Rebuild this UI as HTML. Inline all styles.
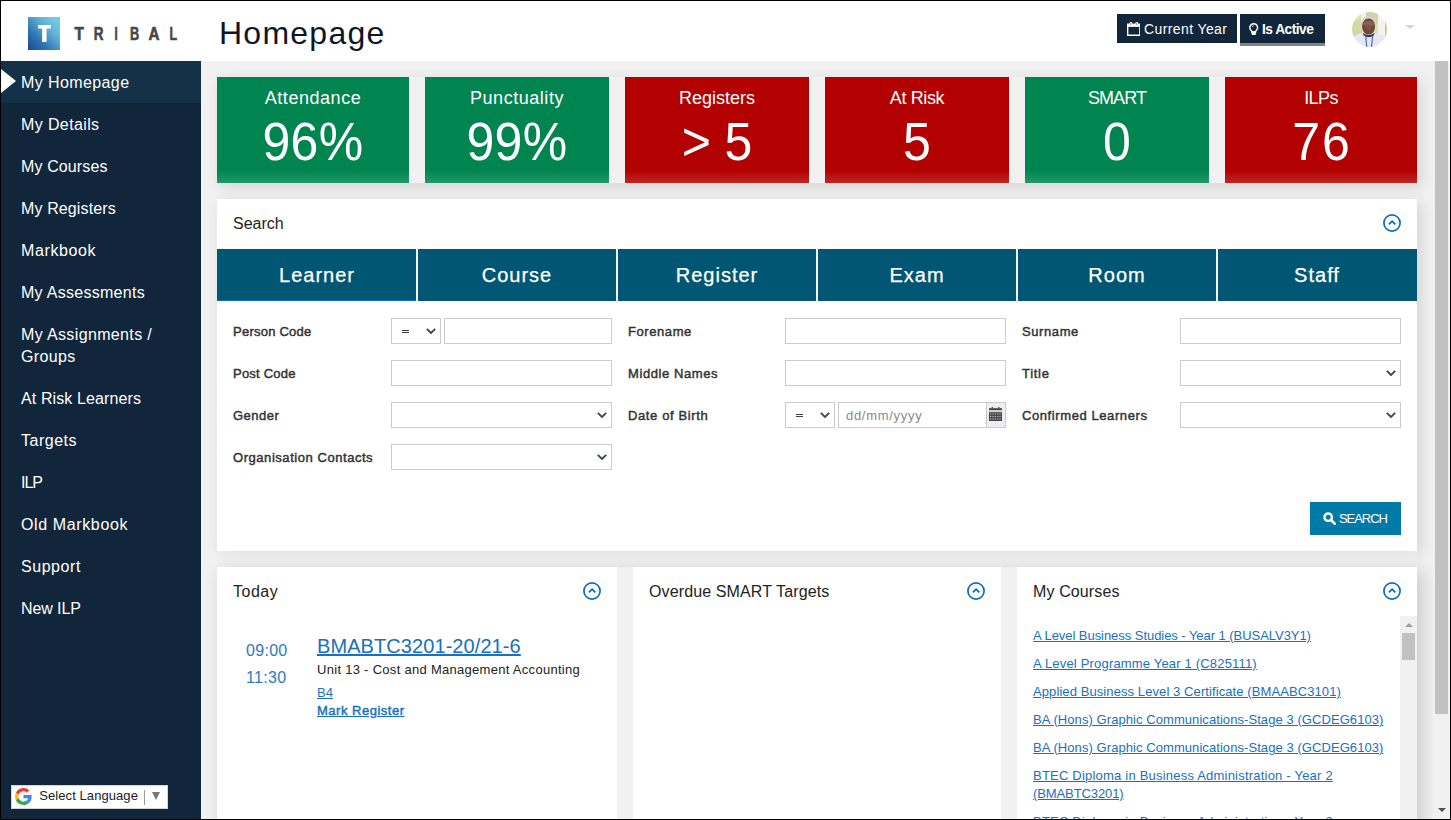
<!DOCTYPE html>
<html lang="en">
<head>
<meta charset="utf-8">
<title>Homepage</title>
<style>
*{box-sizing:border-box;}
html,body{margin:0;padding:0;font-family:"Liberation Sans",sans-serif;}
body{width:1451px;height:820px;overflow:hidden;position:relative;background:#f1f1f1;
  font-family:"Liberation Sans",sans-serif;font-size:13px;color:#222;}
a{color:#1770c4;text-decoration:underline;}
.abs{position:absolute;}
.nw{white-space:nowrap;}

/* ---------- frame ---------- */
#frame{position:absolute;left:0;top:0;width:1451px;height:820px;border:1px solid #000;z-index:100;pointer-events:none;}

/* ---------- header ---------- */
#header{position:absolute;left:1px;top:1px;width:1449px;height:60px;background:#fff;z-index:20;}
#logo{position:absolute;left:27px;top:16px;width:32px;height:33px;
  background:linear-gradient(45deg,#1b4793 0%,#2f74b0 32%,#5fb0d6 64%,#74cbe6 88%);}
#logo svg{position:absolute;left:0;top:0;}
#brand{position:absolute;left:70px;top:22px;}
#title{position:absolute;left:218px;top:12.500px;font-size:32px;line-height:38px;letter-spacing:1.25px;color:#0e1626;}
.hbtn{position:absolute;top:13px;height:29px;background:#11263b;color:#fff;}
#btn-year{left:1116px;width:120px;}
#btn-active{left:1239px;width:85px;height:32px;border-bottom:3px solid #848484;}
.hbtn span{position:absolute;white-space:nowrap;line-height:18px;}
.hbtn svg{position:absolute;}
#avatar{position:absolute;left:1351px;top:11px;width:35px;height:35px;}
#caret{position:absolute;left:1404px;top:24px;width:0;height:0;border-left:5px solid transparent;border-right:5px solid transparent;border-top:4.5px solid #d5d5d5;}

/* ---------- sidebar ---------- */
#sidebar{position:absolute;left:1px;top:61px;width:200px;height:758px;background:#11263b;z-index:15;color:#fff;font-size:16px;}
#sidebar ul{list-style:none;margin:0;padding:0;}
#sidebar li{padding:11px 20px 9px;line-height:22px;position:relative;white-space:nowrap;}
#sidebar li.active{background:#133247;}
#sidebar li.active:before{content:"";position:absolute;left:0;top:8px;width:0;height:0;border-top:12px solid transparent;border-bottom:12px solid transparent;border-left:15px solid #fff;}
#gt{position:absolute;left:10px;top:724px;width:157px;height:24px;background:#fff;border:1px solid #d5d5d5;color:#222;font-size:13px;}
#gt svg{position:absolute;left:3px;top:2px;}
#gt .t{position:absolute;left:27.3px;top:2px;line-height:16px;letter-spacing:0.07px;white-space:nowrap;}
#gt .sep{position:absolute;left:132px;top:4px;width:1px;height:15px;background:#9a9a9a;}
#gt .arr{position:absolute;left:139.700px;top:6px;width:0;height:0;border-left:4.600px solid transparent;border-right:4.600px solid transparent;border-top:8.700px solid #767676;}

/* ---------- page scrollbar ---------- */
#vscroll{position:absolute;left:1433px;top:61px;width:17px;height:758px;background:#f1f1f1;z-index:10;}
#vscroll .thumb{position:absolute;left:2px;top:0;width:13px;height:653px;background:#c1c1c1;}
#vscroll .down{position:absolute;left:5px;top:747px;width:0;height:0;border-left:4px solid transparent;border-right:4px solid transparent;border-top:4px solid #505050;}

/* ---------- main ---------- */
#main{position:absolute;left:201px;top:61px;width:1232px;height:758px;overflow:hidden;}

/* ---------- cards ---------- */
#cards{position:absolute;left:16px;top:16px;width:1200px;height:106px;box-shadow:4px 4px 14px rgba(0,0,0,.12);}
.card{position:absolute;top:0;height:106px;color:#fff;text-align:center;}
.card.g{background:linear-gradient(to bottom,#008450 0,#008450 88%,#239769 100%);}
.card.r{background:linear-gradient(to bottom,#b30000 0,#b30000 88%,#bf2626 100%);}
.card .l{position:absolute;left:0;right:0;top:9px;font-size:18px;line-height:24px;white-space:nowrap;}
.card .v{position:absolute;left:0;right:0;top:34px;font-size:50px;line-height:58px;white-space:nowrap;letter-spacing:.3px;transform:scaleY(1.07);transform-origin:50% 0;}

/* ---------- panels ---------- */
.panel{position:absolute;background:#fff;}
#search{box-shadow:4px 4px 14px rgba(0,0,0,.12);}
#brow{position:absolute;left:16px;top:506px;width:1200px;height:270px;box-shadow:5px 4px 16px rgba(0,0,0,.17);}
#sfade{position:absolute;left:0;top:490px;width:1216px;height:16px;background:rgba(241,241,241,.5);}
.panel h3{position:absolute;left:16px;top:14px;margin:0;font-size:16px;line-height:22px;font-weight:400;color:#222;white-space:nowrap;}
.panel .col{position:absolute;top:15px;width:18px;height:18px;}

/* tabs */
#tabs{position:absolute;left:0;top:50px;width:1200px;height:52px;background:#005673;color:#fff;font-size:20px;}
#tabs .tab{position:absolute;top:0;width:200px;height:52px;line-height:52px;text-align:center;white-space:nowrap;letter-spacing:1px;-webkit-text-stroke:.25px #fff;}
#tabs .sepv{position:absolute;top:0;width:2px;height:52px;background:#fbf6f3;}
#tabs .act{position:absolute;left:0;top:51px;width:199px;height:1.3px;background:#0a6fc6;}

/* form */
.lbl{position:absolute;font-size:13px;font-weight:400;-webkit-text-stroke:.45px #333;line-height:18px;color:#333;white-space:nowrap;}
.inp{position:absolute;height:26px;border:1px solid #cbcbcb;background:#fff;}
.chev{position:absolute;right:4.5px;top:9px;width:10px;height:6.2px;}
.eq{position:absolute;left:10px;top:11px;width:7px;height:3px;border-top:1px solid #3a4048;border-bottom:1px solid #3a4048;font-size:0;}
#sbtn{position:absolute;left:1093px;top:303px;width:91px;height:33px;background:#007aa6;color:#fff;}
#sbtn span{position:absolute;left:29px;top:8px;font-size:13px;line-height:17px;letter-spacing:-1.05px;white-space:nowrap;}
#sbtn svg{position:absolute;left:13px;top:10px;}

/* ---------- bottom panels ---------- */
#today .tm{position:absolute;left:29px;font-size:16px;line-height:22px;color:#2a79c4;letter-spacing:.3px;white-space:nowrap;}
#today .code{position:absolute;left:100px;top:67px;font-size:20px;line-height:24px;letter-spacing:.08px;white-space:nowrap;}
#today .desc{position:absolute;left:100px;top:93.5px;font-size:13px;line-height:18px;color:#222;letter-spacing:.29px;white-space:nowrap;}
#today .rm{position:absolute;left:100px;top:117px;font-size:13px;line-height:18px;white-space:nowrap;}
#today .mk{position:absolute;left:100px;top:135px;font-size:13px;line-height:18px;font-weight:400;-webkit-text-stroke:.45px #1770c4;letter-spacing:.51px;white-space:nowrap;}
#courses .list{position:absolute;left:16px;top:60px;width:366px;}
#courses .list a{display:block;font-size:13px;line-height:18px;margin-bottom:10px;white-space:nowrap;}
#courses .trk{position:absolute;left:383px;top:49px;width:17px;height:210px;background:#f1f1f1;}
#courses .trk .up{position:absolute;left:4.600px;top:6.500px;width:0;height:0;border-left:4px solid transparent;border-right:4px solid transparent;border-bottom:4.500px solid #a0a0a0;}
#courses .trk .th{position:absolute;left:2px;top:17px;width:13px;height:27px;background:#c1c1c1;}
</style>
</head>
<body>

<div id="header">
  <div id="logo">
    <svg width="32" height="33" viewBox="0 0 32 33"><path d="M10 8h12.800v3.500h-4.200V25h-4.400V11.500H10z" fill="#fff"/></svg>
  </div>
  <svg id="brand" width="112" height="20" viewBox="0 0 112 20">
    <g fill="#474747" stroke="#474747" stroke-width=".6" font-family="Liberation Sans, sans-serif" font-weight="700" font-size="17.5">
      <text x="3.4" y="17" textLength="9.4" lengthAdjust="spacingAndGlyphs">T</text>
      <text x="22.7" y="17" textLength="9.7" lengthAdjust="spacingAndGlyphs">R</text>
      <text x="43.6" y="17" textLength="3.2" lengthAdjust="spacingAndGlyphs">I</text>
      <text x="59" y="17" textLength="9.2" lengthAdjust="spacingAndGlyphs">B</text>
      <text x="77.4" y="17" textLength="11" lengthAdjust="spacingAndGlyphs">A</text>
      <text x="98.5" y="17" textLength="7.6" lengthAdjust="spacingAndGlyphs">L</text>
    </g>
  </svg>
  <div id="title">Homepage</div>

  <div class="hbtn" id="btn-year">
    <svg style="left:9.7px;top:8px" width="13.6" height="14" viewBox="0 0 13.6 14"><path d="M.7 2.4h12.2v10.9H.7z" fill="none" stroke="#fff" stroke-width="1.4"/><path d="M0 1.7h13.6v3.2H0z" fill="#fff"/><rect x="2.6" y="0" width="2.6" height="3.4" rx="1.1" fill="#fff"/><rect x="8.4" y="0" width="2.6" height="3.4" rx="1.1" fill="#fff"/><rect x="3.5" y=".9" width=".8" height="2.1" rx=".4" fill="#5a3a7a"/><rect x="9.3" y=".9" width=".8" height="2.1" rx=".4" fill="#5a3a7a"/></svg>
    <span style="left:27px;top:6px;font-size:14px;letter-spacing:.39px;">Current Year</span>
  </div>
  <div class="hbtn" id="btn-active">
    <svg style="left:9.3px;top:8.8px" width="9.4" height="12.4" viewBox="0 0 9.4 12.4"><path d="M4.7 .8a3.8 3.8 0 0 0-2.5 6.7c.5.5.6 .9.6 1.5h3.8c0-.6.1-1 .6-1.5A3.8 3.8 0 0 0 4.700 .8z" fill="none" stroke="#fff" stroke-width="1.45"/><path d="M2.5 8.100h4.400v2.300a2.200 2 0 0 1-4.400 0z" fill="#fff"/><path d="M3.300 4.100a1.500 1.500 0 0 1 1.500-1.400" stroke="#fff" stroke-width=".8" fill="none"/></svg>
    <span style="left:22px;top:7px;font-size:13.8px;font-weight:700;letter-spacing:-0.55px;">Is Active</span>
  </div>

  <svg id="avatar" viewBox="0 0 35 35">
    <defs><clipPath id="avc"><circle cx="17.5" cy="17.5" r="17.5"/></clipPath>
    <filter id="avb" x="-10%" y="-10%" width="120%" height="120%"><feGaussianBlur stdDeviation=".7"/></filter></defs>
    <g clip-path="url(#avc)"><g filter="url(#avb)">
      <rect x="-2" y="-2" width="39" height="39" fill="#dde0b4"/>
      <rect x="-2" y="8" width="12" height="16" fill="#d3d9a3"/>
      <rect x="9" y="-2" width="5" height="12" fill="#f4f2ef"/>
      <rect x="14" y="-2" width="12" height="14" fill="#cfd6a2"/>
      <rect x="26" y="-2" width="7" height="39" fill="#f3f2f0"/>
      <rect x="33" y="4" width="4" height="24" fill="#c6ce86"/>
      <path d="M-2 27 Q5 21.5 11 21 L24 21 Q31 22.5 37 29 V37 H-2z" fill="#e6e7f3"/>
      <ellipse cx="16.600" cy="9.500" rx="6.800" ry="5.500" fill="#d6d0d3"/>
      <ellipse cx="16.600" cy="14.500" rx="6.500" ry="8" fill="#6e4638"/>
      <ellipse cx="16.600" cy="11.500" rx="5.200" ry="2.600" fill="#8a6252"/>
      <ellipse cx="16.600" cy="15.500" rx="3" ry="2.500" fill="#7d5344"/>
      <path d="M11 21 Q16.600 25 22.500 21 L22 23.200 Q16.600 27.500 11.500 23.200z" fill="#3a3145"/>
      <path d="M15.300 25.500 h3.400 L18.300 37 h-2.600z" fill="#dfe8f6"/>
    </g>
      <path d="M13.800 23.500 L14.700 35 M20.600 23.500 L19.500 35" stroke="#3f6dc0" stroke-width="1.200" fill="none"/>
    </g>
  </svg>
  <div id="caret"></div>
</div>

<div id="sidebar">
  <ul>
    <li class="active"><span style="letter-spacing:.4px">My Homepage</span></li>
    <li><span style="letter-spacing:.38px">My Details</span></li>
    <li><span style="letter-spacing:.12px">My Courses</span></li>
    <li><span style="letter-spacing:.12px">My Registers</span></li>
    <li><span style="letter-spacing:.62px">Markbook</span></li>
    <li><span style="letter-spacing:.28px">My Assessments</span></li>
    <li><span style="letter-spacing:.36px">My Assignments /<br>Groups</span></li>
    <li><span style="letter-spacing:.11px">At Risk Learners</span></li>
    <li><span style="letter-spacing:.5px">Targets</span></li>
    <li><span style="letter-spacing:-1px">ILP</span></li>
    <li><span style="letter-spacing:.62px">Old Markbook</span></li>
    <li><span style="letter-spacing:.55px">Support</span></li>
    <li><span style="letter-spacing:-.1px">New ILP</span></li>
  </ul>
  <div id="gt">
    <svg width="17" height="17" viewBox="0 0 48 48"><path fill="#EA4335" d="M24 9.5c3.54 0 6.71 1.22 9.21 3.6l6.85-6.85C35.9 2.38 30.47 0 24 0 14.62 0 6.51 5.38 2.56 13.22l7.98 6.19C12.43 13.72 17.74 9.5 24 9.5z"/><path fill="#4285F4" d="M46.98 24.55c0-1.57-.15-3.09-.38-4.55H24v9.02h12.94c-.58 2.96-2.26 5.48-4.78 7.18l7.73 6c4.51-4.18 7.09-10.36 7.09-17.65z"/><path fill="#FBBC05" d="M10.53 28.59c-.48-1.45-.76-2.99-.76-4.59s.27-3.14.76-4.59l-7.98-6.19C.92 16.46 0 20.12 0 24c0 3.88.92 7.54 2.56 10.78l7.97-6.19z"/><path fill="#34A853" d="M24 48c6.48 0 11.93-2.13 15.89-5.81l-7.73-6c-2.15 1.45-4.92 2.3-8.16 2.3-6.26 0-11.57-4.22-13.47-9.91l-7.98 6.19C6.51 42.62 14.62 48 24 48z"/></svg>
    <span class="t">Select Language</span>
    <span class="sep"></span>
    <span class="arr"></span>
  </div>
</div>

<div id="vscroll"><div class="thumb"></div><div class="down"></div></div>

<div id="main">
<div id="cards">
  <div class="card g" style="left:0px;width:192px"><div class="l" style="letter-spacing:0.54px">Attendance</div><div class="v">96%</div></div>
  <div class="card g" style="left:208px;width:184px"><div class="l" style="letter-spacing:0.54px">Punctuality</div><div class="v">99%</div></div>
  <div class="card r" style="left:408px;width:184px"><div class="l" style="letter-spacing:0px">Registers</div><div class="v" style="letter-spacing:-.2px">&gt; 5</div></div>
  <div class="card r" style="left:608px;width:184px"><div class="l" style="letter-spacing:-.38px">At Risk</div><div class="v">5</div></div>
  <div class="card g" style="left:808px;width:184px"><div class="l" style="letter-spacing:-.9px">SMART</div><div class="v">0</div></div>
  <div class="card r" style="left:1008px;width:192px"><div class="l" style="letter-spacing:-.57px">ILPs</div><div class="v" style="letter-spacing:2px;text-indent:2px">76</div></div>
</div>
<div class="panel" id="search" style="left:16px;top:138px;width:1200px;height:352px">
  <h3>Search</h3><svg class="col" style="left:1166px" viewBox="0 0 18 18"><circle cx="9" cy="9" r="8.1" fill="none" stroke="#0a6cbf" stroke-width="1.7"/><path d="M5.900 10.400L9.100 7.200l3.200 3.200" fill="none" stroke="#0a6cbf" stroke-width="1.8"/></svg>
  <div id="tabs">
    <div class="tab" style="left:0px">Learner</div>
    <div class="tab" style="left:200px">Course</div>
    <div class="tab" style="left:400px">Register</div>
    <div class="tab" style="left:600px">Exam</div>
    <div class="tab" style="left:800px">Room</div>
    <div class="tab" style="left:1000px">Staff</div>
    <div class="sepv" style="left:199px"></div>
    <div class="sepv" style="left:399px"></div>
    <div class="sepv" style="left:599px"></div>
    <div class="sepv" style="left:799px"></div>
    <div class="sepv" style="left:999px"></div>
    <div class="act"></div>
  </div>
  <div class="lbl" style="margin-top:1px;left:16px;top:123px;letter-spacing:0.24px">Person Code</div>
  <div class="inp" style="left:174px;top:119px;width:50px"><span class="eq">=</span><svg class="chev" viewBox="0 0 10 6.2"><path d="M.8 .9L5 5 9.200 .9" fill="none" stroke="#3f4750" stroke-width="1.9"/></svg></div>
  <div class="inp" style="left:227px;top:119px;width:168px"></div>
  <div class="lbl" style="margin-top:1px;left:16px;top:165px;letter-spacing:0.22px">Post Code</div>
  <div class="inp" style="left:174px;top:161px;width:221px"></div>
  <div class="lbl" style="margin-top:1px;left:16px;top:207px;letter-spacing:0.49px">Gender</div>
  <div class="inp" style="left:174px;top:203px;width:221px"><svg class="chev" viewBox="0 0 10 6.2"><path d="M.8 .9L5 5 9.200 .9" fill="none" stroke="#3f4750" stroke-width="1.9"/></svg></div>
  <div class="lbl" style="margin-top:1px;left:16px;top:249px;letter-spacing:0.55px">Organisation Contacts</div>
  <div class="inp" style="left:174px;top:245px;width:221px"><svg class="chev" viewBox="0 0 10 6.2"><path d="M.8 .9L5 5 9.200 .9" fill="none" stroke="#3f4750" stroke-width="1.9"/></svg></div>
  <div class="lbl" style="margin-top:1px;left:411px;top:123px;letter-spacing:0.58px">Forename</div>
  <div class="inp" style="left:568px;top:119px;width:221px"></div>
  <div class="lbl" style="margin-top:1px;left:411px;top:165px;letter-spacing:0.59px">Middle Names</div>
  <div class="inp" style="left:568px;top:161px;width:221px"></div>
  <div class="lbl" style="margin-top:1px;left:411px;top:207px;letter-spacing:0.62px">Date of Birth</div>
  <div class="inp" style="left:568px;top:203px;width:50px"><span class="eq">=</span><svg class="chev" viewBox="0 0 10 6.2"><path d="M.8 .9L5 5 9.200 .9" fill="none" stroke="#3f4750" stroke-width="1.9"/></svg></div>
  <div class="inp" style="left:621px;top:203px;width:149px"><span style="position:absolute;left:7px;top:4px;font-size:13px;line-height:17px;color:#8a8a8a;letter-spacing:.7px;white-space:nowrap">dd/mm/yyyy</span></div>
  <div class="inp" style="left:769px;top:203px;width:20px;background:#eee"><svg style="position:absolute;left:2px;top:4px" width="13.2" height="14.2" viewBox="0 0 13.2 14.2"><rect x="2.6" y="0" width="1.4" height="1.6" fill="#555"/><rect x="9.2" y="0" width="1.4" height="1.6" fill="#555"/><rect x="0" y="1.2" width="13.2" height="1.9" fill="#444"/><rect x="0" y="3.100" width="13.2" height="2.100" fill="#cfcdd0"/><rect x="0" y="5.200" width="13.2" height="9" fill="#444"/><g fill="#a9b7c2"><rect x="1.00" y="6.40" width="1.3" height="1.2"/><rect x="3.35" y="6.40" width="1.3" height="1.2"/><rect x="5.70" y="6.40" width="1.3" height="1.2"/><rect x="8.05" y="6.40" width="1.3" height="1.2"/><rect x="10.40" y="6.40" width="1.3" height="1.2"/><rect x="1.00" y="8.90" width="1.3" height="1.2"/><rect x="3.35" y="8.90" width="1.3" height="1.2"/><rect x="5.70" y="8.90" width="1.3" height="1.2"/><rect x="8.05" y="8.90" width="1.3" height="1.2"/><rect x="10.40" y="8.90" width="1.3" height="1.2"/><rect x="1.00" y="11.40" width="1.3" height="1.2"/><rect x="3.35" y="11.40" width="1.3" height="1.2"/><rect x="5.70" y="11.40" width="1.3" height="1.2"/><rect x="8.05" y="11.40" width="1.3" height="1.2"/><rect x="10.40" y="11.40" width="1.3" height="1.2"/></g></svg></div>
  <div class="lbl" style="margin-top:1px;left:805px;top:123px;letter-spacing:0.59px">Surname</div>
  <div class="inp" style="left:963px;top:119px;width:221px"></div>
  <div class="lbl" style="margin-top:1px;left:805px;top:165px;letter-spacing:0.71px">Title</div>
  <div class="inp" style="left:963px;top:161px;width:221px"><svg class="chev" viewBox="0 0 10 6.2"><path d="M.8 .9L5 5 9.200 .9" fill="none" stroke="#3f4750" stroke-width="1.9"/></svg></div>
  <div class="lbl" style="margin-top:1px;left:805px;top:207px;letter-spacing:0.59px">Confirmed Learners</div>
  <div class="inp" style="left:963px;top:203px;width:221px"><svg class="chev" viewBox="0 0 10 6.2"><path d="M.8 .9L5 5 9.200 .9" fill="none" stroke="#3f4750" stroke-width="1.9"/></svg></div>
  <div id="sbtn"><svg width="13" height="13" viewBox="0 0 14 14"><circle cx="5.6" cy="5.6" r="4" fill="none" stroke="#fff" stroke-width="2.6"/><path d="M8.6 8.6l4 4" stroke="#fff" stroke-width="2.8" stroke-linecap="round"/></svg><span>SEARCH</span></div>
</div>
<div id="sfade"></div>
<div id="brow">
<div class="panel" id="today" style="left:0;top:0;width:400px;height:270px">
  <h3 style="letter-spacing:.5px">Today</h3><svg class="col" style="left:366px" viewBox="0 0 18 18"><circle cx="9" cy="9" r="8.1" fill="none" stroke="#0a6cbf" stroke-width="1.7"/><path d="M5.900 10.400L9.100 7.200l3.200 3.200" fill="none" stroke="#0a6cbf" stroke-width="1.8"/></svg>
  <div class="tm" style="top:73px">09:00</div><div class="tm" style="top:100px">11:30</div>
  <a class="code" href="#">BMABTC3201-20/21-6</a>
  <div class="desc">Unit 13 - Cost and Management Accounting</div>
  <a class="rm" href="#">B4</a>
  <a class="mk" href="#">Mark Register</a>
</div>
<div class="panel" id="overdue" style="left:416px;top:0;width:368px;height:270px">
  <h3 style="letter-spacing:.12px">Overdue SMART Targets</h3><svg class="col" style="left:334px" viewBox="0 0 18 18"><circle cx="9" cy="9" r="8.1" fill="none" stroke="#0a6cbf" stroke-width="1.7"/><path d="M5.900 10.400L9.100 7.200l3.200 3.200" fill="none" stroke="#0a6cbf" stroke-width="1.8"/></svg>
</div>
<div class="panel" id="courses" style="left:800px;top:0;width:400px;height:270px">
  <h3 style="letter-spacing:.12px">My Courses</h3><svg class="col" style="left:366px" viewBox="0 0 18 18"><circle cx="9" cy="9" r="8.1" fill="none" stroke="#0a6cbf" stroke-width="1.7"/><path d="M5.900 10.400L9.100 7.200l3.200 3.200" fill="none" stroke="#0a6cbf" stroke-width="1.8"/></svg>
  <div class="list">
    <a href="#" style="letter-spacing:-0.05px">A Level Business Studies - Year 1 (BUSALV3Y1)</a>
    <a href="#" style="letter-spacing:0.18px">A Level Programme Year 1 (C825111)</a>
    <a href="#" style="letter-spacing:0.09px">Applied Business Level 3 Certificate (BMAABC3101)</a>
    <a href="#" style="letter-spacing:0.07px">BA (Hons) Graphic Communications-Stage 3 (GCDEG6103)</a>
    <a href="#" style="letter-spacing:0.07px">BA (Hons) Graphic Communications-Stage 3 (GCDEG6103)</a>
    <a href="#" style="letter-spacing:0.21px">BTEC Diploma in Business Administration - Year 2<br><span style="letter-spacing:-.1px">(BMABTC3201)</span></a>
    <a href="#" style="letter-spacing:0.21px">BTEC Diploma in Business Administration - Year 2<br><span style="letter-spacing:-.1px">(BMABTC3201)</span></a>
  </div>
  <div class="trk"><div class="up"></div><div class="th"></div></div>
</div>
</div>


</div>

<div id="frame"></div>
</body>
</html>
